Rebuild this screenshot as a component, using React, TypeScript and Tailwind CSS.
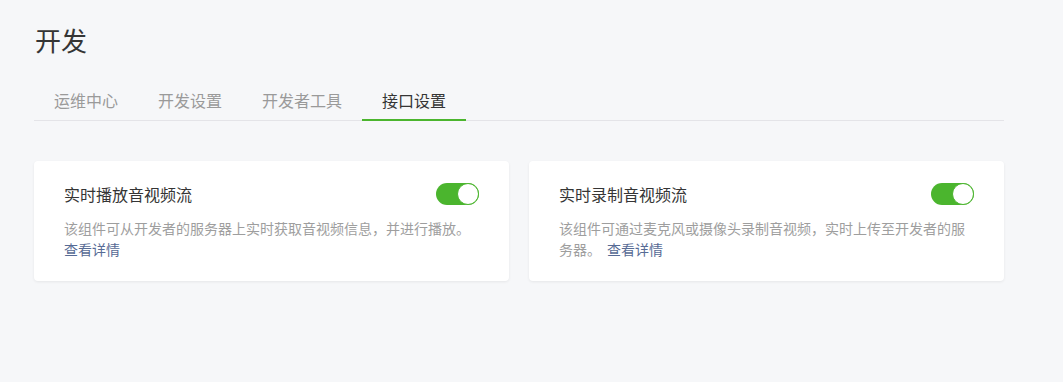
import React from "react";

const font = { fontFamily: '"Noto Sans CJK SC", "Noto Sans", sans-serif' };

function Toggle() {
  return (
    <div className="flex h-[22px] w-[43px] items-center justify-end rounded-full bg-[#4bb52e]">
      <div className="h-[22px] w-[22px] rounded-full border border-[#4bb52e] bg-white" />
    </div>
  );
}

function Card({ title, desc }: { title: string; desc: string }) {
  return (
    <div className="w-[475px] rounded-[4px] bg-white px-[30px] pb-[21px] pt-[21px] shadow-[0_1px_3px_rgba(0,0,0,0.07)]">
      <div className="flex h-6 items-center justify-between">
        <div className="text-[16px] leading-6 text-[#353535]">{title}</div>
        <Toggle />
      </div>
      <p className="mt-[12px] text-[14px] leading-[21px] text-[#9e9e9e]">
        {desc}
        <span className="inline-block w-[6px]" />
        <a className="text-[#576b95]">查看详情</a>
      </p>
    </div>
  );
}

export default function App() {
  const tabs = ["运维中心", "开发设置", "开发者工具", "接口设置"];
  return (
    <div className="min-h-[382px] bg-[#f6f7f9] pl-[34px] pt-[22px]" style={font}>
      <div className="w-[970px]">
        <h1 className="pl-px text-[26px] leading-9 text-[#353535]">开发</h1>
        <div className="mt-[30px] flex border-b border-[#e4e4e8]">
          {tabs.map((t, i) => (
            <div
              key={t}
              className={
                i === 3
                  ? "-mb-px border-b-2 border-[#4bb52e] px-5 pb-[7px] text-[16px] leading-6 text-[#353535]"
                  : "-mb-px border-b-2 border-transparent px-5 pb-[7px] text-[16px] leading-6 text-[#9a9a9a]"
              }
            >
              {t}
            </div>
          ))}
        </div>
        <div className="mt-10 flex gap-5">
          <Card
            title="实时播放音视频流"
            desc="该组件可从开发者的服务器上实时获取音视频信息，并进行播放。"
          />
          <Card
            title="实时录制音视频流"
            desc="该组件可通过麦克风或摄像头录制音视频，实时上传至开发者的服务器。"
          />
        </div>
      </div>
    </div>
  );
}
